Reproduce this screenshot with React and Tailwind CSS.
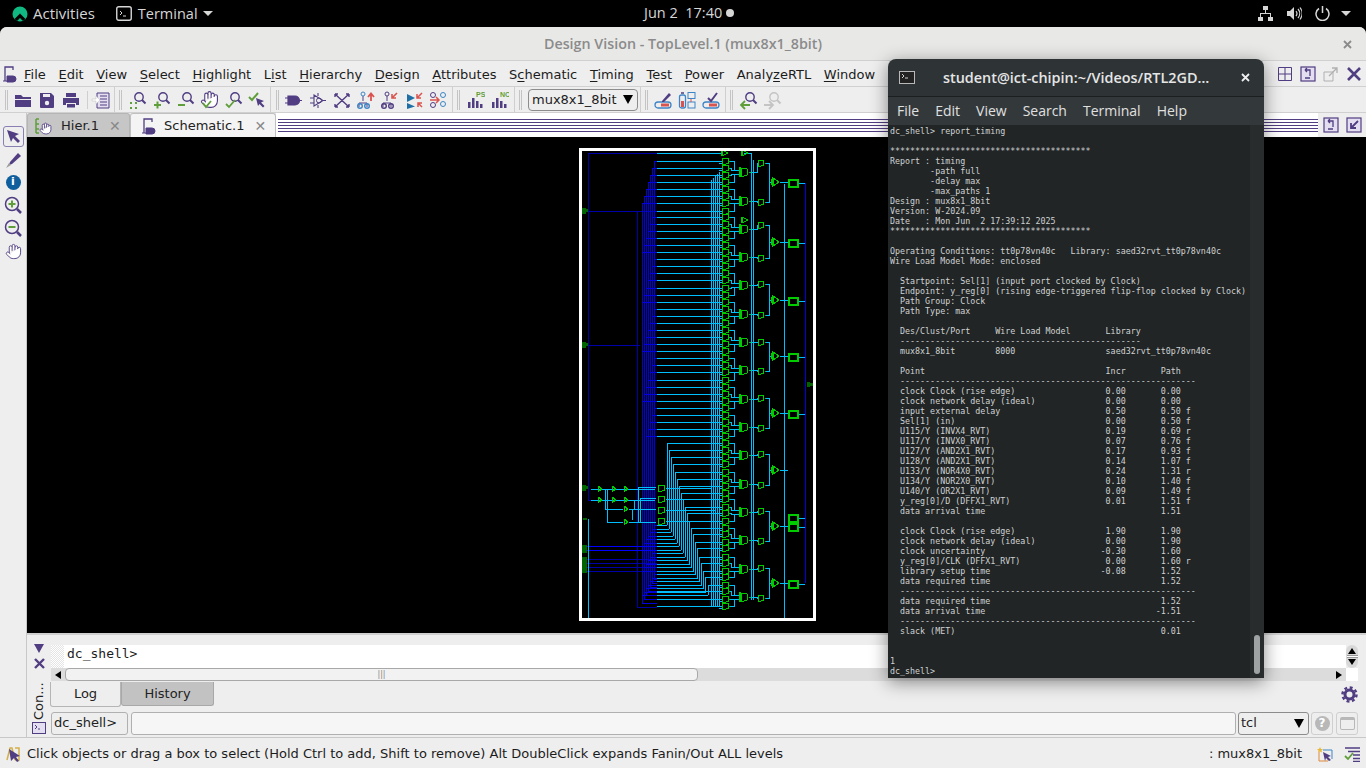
import React from "react";
import { Hand } from "lucide-react";

const P = "#503d82";
const G = "#5f9e3a";
const R_ = "#d9534f";
const B = "#3d85c6";

const sans = "font-['DejaVu_Sans',sans-serif]";
const shell = "font-['Open_Sans',sans-serif]";
const mono = "font-['DejaVu_Sans_Mono',monospace]";

// ---- schematic data (page coordinates, the svg viewBox starts at 582,151)
const ROWS = [161, 168, 175, 182, 189, 196, 203, 211, 217, 224, 231, 238, 245, 252, 259, 266, 273, 280, 288, 295, 302, 309, 316, 323, 330, 337, 344, 351, 358, 365, 372, 380, 387, 394, 401, 408, 415, 422, 429, 436, 443, 450, 457, 464, 472, 479, 486, 493, 499, 507, 513, 521, 528, 534, 542, 548, 557, 563, 571, 577, 585, 591, 599, 606];
const L3 = [172, 201, 229, 257, 285, 314, 342, 370, 399, 427, 455, 484, 512, 540, 569, 597];
const L4 = [163, 202, 225, 258, 284, 315, 342, 371, 398, 428, 454, 485, 511, 541, 568, 598];
const L5 = [182, 242, 300, 356, 413, 470, 526, 583];
const FF = [183, 243, 301, 357, 414, 518, 527, 584];
const TRUNKS = [654, 652, 650, 648, 646, 644, 642, 637];

function buildSchematic() {
  let cyan = "M657 153H722M744 153H751M751 153V600M753 160V600M784 184V618M588 519V618";
  let blue = "M805 183V583";
  let navy = "M588 153V500M588 153H657M587 211H657M587 345H640M588 500H597M587 559H657M587 563H657M587 567H657M587 571H657";
  let bright = "M587 546H657M587 550H657";
  let gate = "M722 150l6 3l-6 3zM721 150v6M742 150l6 3l-6 3zM741 150v6M742 217l6 3l-6 3zM741 217v6";
  let pin = "";

  TRUNKS.forEach((x, t) => {
    const top = t === 7 ? 211 : 161 + 7 * t;
    const bot = t === 7 ? 607 : 579 + 4 * t;
    const seg = `M${x} ${top}V${bot}M${x} ${bot}H657`;
    if (t === 7) navy += seg;
    else blue += seg;
  });

  const firstLow = ROWS.indexOf(443);
  ROWS.forEach((y, i) => {
    const k = i - firstLow;
    if (k >= 0 && k <= 20) {
      const x = 667 + 2.05 * k;
      const yb = Math.round(525 + 3.5 * k);
      cyan += `M${x} ${y}H722M${x} ${y}V${yb}M657 ${yb}H${x}`;
      blue += `M${TRUNKS[k % 7]} ${yb}H657`;
    } else {
      cyan += `M657 ${y}H722`;
      if (i < firstLow) {
        // the stub only reaches a trunk that has started by this row
        const t = i % 7;
        const tr = 161 + 7 * t <= y ? TRUNKS[t] : 654;
        blue += `M${tr} ${y}H657`;
      }
    }
    cyan += `M719 ${y + 2}H722`;
    gate += `M722 ${y - 3}h4a3 3 0 0 1 0 6h-4zM729 ${y}h1`;
    // outputs run to the mux of their group
    const j = Math.min(15, Math.floor(i / 4));
    const side = i % 4 < 2 ? -2 : 2;
    const bend = 731 + (i % 4 === 0 || i % 4 === 3 ? 3 : 0);
    cyan += `M730 ${y}H${bend}V${L3[j] + side}H740`;
  });
  cyan += "M711 180V606M713 178V606M715 176V606M717 174V606M719 172V606";

  L3.forEach((y, j) => {
    gate += `M741 ${y - 4}h3a4 4 0 0 1 0 8h-3zM740 ${y - 5}v10M739 ${y - 5}v10M749 ${y}h2`;
    cyan += `M751 ${y}H757V${L4[j]}H758`;
    gate += `M758 ${L4[j] - 3}h3a3 3 0 0 1 0 6h-3zM765 ${L4[j]}h1`;
    if (j % 2 === 0) {
      const m = j / 2;
      cyan += `M766 ${L4[j]}H769V${L4[j + 1]}H766M769 ${L5[m]}H771`;
      gate += `M773 ${L5[m] - 4}l6 4l-6 4zM772 ${L5[m] - 5}v10M771 ${L5[m] - 3}v6`;
    }
  });
  L5.forEach((y, m) => {
    cyan += `M780 ${y}H788`;
    cyan += `M798 ${FF[m]}H805`;
    gate += `M789 ${FF[m] - 3}h8v6h-8zM788 ${FF[m] - 4}h10v8h-10z`;
  });

  // select decode at the bottom left
  [598, 612, 624].forEach((x) => {
    gate += `M${x} ${486}l4 3l-4 3zM${x} ${497}l4 3l-4 3z`;
  });
  gate += "M624 506l4 3l-4 3zM624 519l4 3l-4 3z";
  [488, 499, 510, 521].forEach((y, n) => {
    gate += `M658 ${y - 3}h4a3 3 0 0 1 0 6h-4z`;
    cyan += `M666 ${y}H${711 + 2 * n}`;
  });
  cyan += "M591 489H655M591 500H655M605 489V509H623M607 489V522H623M629 509H656M629 522H656M638 487V522M640 498V522M632 509V520M634 500V509";
  cyan += "M638 487H656M640 498H656";

  pin += "M582 208h4v1h2v3h-2v2h-4zM582 342h4v1h2v3h-2v2h-4zM582 485h4v1h2v3h-2v2h-4zM582 545h5v8h-5zM582 557h5v16h-5zM583 518h4v2h-4zM807 382h3v1h3v3h-3v1h-3z";
  return { cyan, blue, navy, bright, gate, pin };
}
const S = buildSchematic();

const Schematic = () => (
  <div className="ml-[552px] mt-[11px] h-[473px] w-[237px] border-[3px] border-white">
    <svg width="231" height="467" viewBox="582 151 231 467" fill="none" shapeRendering="crispEdges">
      <path d={S.navy} stroke="#0000a8" />
      <path d={S.blue} stroke="#0000e0" />
      <path d={S.bright} stroke="#0000ff" />
      <path d={S.cyan} stroke="#00bfff" />
      <path d={S.gate} stroke="#00cc00" />
      <path d={S.pin} fill="#006400" />
    </svg>
  </div>
);

// ---- terminal text
const row = (name, incr = "", path = "", tag = "") =>
  ("  " + name).padEnd(42) + incr.padStart(5) + path.padStart(11) + (tag ? " " + tag : "");
const dash = "  " + "-".repeat(59);
const stars = "*".repeat(40);
const LINES = [
  "dc_shell> report_timing",
  "",
  stars,
  "Report : timing",
  "        -path full",
  "        -delay max",
  "        -max_paths 1",
  "Design : mux8x1_8bit",
  "Version: W-2024.09",
  "Date   : Mon Jun  2 17:39:12 2025",
  stars,
  "",
  "Operating Conditions: tt0p78vn40c   Library: saed32rvt_tt0p78vn40c",
  "Wire Load Model Mode: enclosed",
  "",
  "  Startpoint: Sel[1] (input port clocked by Clock)",
  "  Endpoint: y_reg[0] (rising edge-triggered flip-flop clocked by Clock)",
  "  Path Group: Clock",
  "  Path Type: max",
  "",
  "  Des/Clust/Port     Wire Load Model       Library",
  "  " + "-".repeat(48),
  "  mux8x1_8bit        8000                  saed32rvt_tt0p78vn40c",
  "",
  row("Point", "Incr", " Path"),
  dash,
  row("clock Clock (rise edge)", "0.00", "0.00"),
  row("clock network delay (ideal)", "0.00", "0.00"),
  row("input external delay", "0.50", "0.50", "f"),
  row("Sel[1] (in)", "0.00", "0.50", "f"),
  row("U115/Y (INVX4_RVT)", "0.19", "0.69", "r"),
  row("U117/Y (INVX0_RVT)", "0.07", "0.76", "f"),
  row("U127/Y (AND2X1_RVT)", "0.17", "0.93", "f"),
  row("U128/Y (AND2X1_RVT)", "0.14", "1.07", "f"),
  row("U133/Y (NOR4X0_RVT)", "0.24", "1.31", "r"),
  row("U134/Y (NOR2X0_RVT)", "0.10", "1.40", "f"),
  row("U140/Y (OR2X1_RVT)", "0.09", "1.49", "f"),
  row("y_reg[0]/D (DFFX1_RVT)", "0.01", "1.51", "f"),
  row("data arrival time", "", "1.51"),
  "",
  row("clock Clock (rise edge)", "1.90", "1.90"),
  row("clock network delay (ideal)", "0.00", "1.90"),
  row("clock uncertainty", "-0.30", "1.60"),
  row("y_reg[0]/CLK (DFFX1_RVT)", "0.00", "1.60", "r"),
  row("library setup time", "-0.08", "1.52"),
  row("data required time", "", "1.52"),
  dash,
  row("data required time", "", "1.52"),
  row("data arrival time", "", "-1.51"),
  dash,
  row("slack (MET)", "", "0.01"),
  "",
  "",
  "1",
  "dc_shell> ",
];

// ---- small icons
const Ico = ({ children, s = 20 }) => (
  <svg width={s} height={s} viewBox="0 0 20 20" fill="none">
    {children}
  </svg>
);
const Mag = ({ c = P }) => (
  <>
    <circle cx="12" cy="7" r="4.2" stroke={c} strokeWidth="1.4" />
    <path d="M15 10l3.5 3.5" stroke={c} strokeWidth="2" />
  </>
);
const Bars = ({ t }) => (
  <>
    <path d="M3 12h2.5v6H3zM7 8h2.5v10H7zM11 11h2.5v7H11zM15 14h2.5v4H15z" fill={P} />
    <text x="11" y="7" fontSize="7" fontWeight="700" fill={G} fontFamily="Liberation Sans">{t}</text>
  </>
);
const Battery = ({ mark }) => (
  <>
    <rect x="2" y="12" width="16" height="6" rx="3" stroke={B} strokeWidth="1.3" />
    <rect x="8" y="13.5" width="8" height="3" fill={R_} />
    {mark}
  </>
);

const TOOL_ICONS = {
  folder: <path d="M2 5h6l2 2h8v2H2zM2 10h16v7H2z" fill={P} />,
  save: (
    <>
      <path d="M3 3h11l3 3v11a1 1 0 0 1-1 1H4a1 1 0 0 1-1-1z" fill={P} />
      <rect x="6" y="4" width="7" height="3" fill="#eee" />
      <circle cx="10" cy="13" r="2.2" fill="#eee" />
    </>
  ),
  print: (
    <>
      <path d="M5 3h10v4H5zM2 8h16v7h-3v-2H5v2H2z" fill={P} />
      <rect x="6" y="14" width="8" height="3.5" fill={P} />
    </>
  ),
  script: (
    <>
      <path d="M6 3h12v15H6z" fill="#e3dff0" stroke={P} />
      <path d="M9 6h7M9 9h7M9 12h7M9 15h7" stroke={P} />
      <path d="M1 9h4V6l4 4-4 4v-3H1z" fill="#fff" stroke="#bbb" strokeWidth=".5" />
    </>
  ),
  zfit: (
    <>
      <Mag />
      <path d="M3 12h2v2H3zM8 12h2v2H8zM3 17h2v2H3zM8 17h2v2H8z" fill={G} />
    </>
  ),
  zin: (
    <>
      <Mag />
      <path d="M3 15h7M6.5 11.5v7" stroke={G} strokeWidth="2" />
    </>
  ),
  zout: (
    <>
      <Mag />
      <path d="M3 15h7" stroke={G} strokeWidth="2" />
    </>
  ),
  hand: (
    <>
      <foreignObject x="1" y="0" width="19" height="19">
        <Hand size={19} color={P} fill="#fff" strokeWidth={1.4} />
      </foreignObject>
      <path d="M4 13l3 4 5-6" stroke={G} strokeWidth="1.8" />
    </>
  ),
  zcheck: (
    <>
      <Mag />
      <path d="M3 14l3 3 6-7" stroke={G} strokeWidth="1.8" />
    </>
  ),
  checkarrow: (
    <>
      <path d="M2 7l3 3 6-7" stroke={G} strokeWidth="2" />
      <path d="M9 8l8 3-3 1.5 3.5 3.5-1.5 1.5-3.5-3.5L11 16z" fill={P} />
    </>
  ),
  plug: <path d="M4 6h7a4.5 4.5 0 0 1 0 9H4zM1 8h3M1 13h3M15 10.5h3" fill={P} stroke={P} strokeWidth="1.2" />,
  gate: (
    <>
      <path d="M6 5l9 5.5L6 16zM2 8h4M2 13h4M15 10.5h3M10 3v3M10 15v3" stroke={P} strokeWidth="1.1" />
      <circle cx="11" cy="10.5" r="2.5" stroke={P} />
    </>
  ),
  cross: <path d="M3 4l14 13M17 4L3 17M3 4h3M3 4v3M17 4h-3M17 4v3M3 17h3M3 17v-3M17 17h-3M17 17v-3" stroke={P} strokeWidth="1.4" />,
  treeup: (
    <>
      <path d="M7 6v5M3 17v-4h8v4" stroke={P} />
      <circle cx="7" cy="4" r="2" stroke={B} />
      <circle cx="4" cy="16" r="2.3" stroke={B} strokeWidth="1.4" />
      <circle cx="11" cy="16" r="2.3" stroke={B} strokeWidth="1.4" />
      <path d="M15 11V4M12 7l3-3.5L18 7" stroke={R_} strokeWidth="1.8" />
    </>
  ),
  treedown: (
    <>
      <path d="M7 6v5M3 17v-4h8v4" stroke={P} />
      <circle cx="7" cy="4" r="2" stroke={P} />
      <circle cx="4" cy="16" r="2.3" stroke={P} strokeWidth="1.4" />
      <circle cx="11" cy="16" r="2.3" stroke={P} strokeWidth="1.4" />
      <path d="M17 3l-5 5M12 4v4h4" stroke={R_} strokeWidth="1.6" />
    </>
  ),
  tri: (
    <>
      <path d="M3 4l8 4-8 4zM3 13l8 3.5L3 19z" fill="#1d6fa5" />
      <path d="M18 3l-5 5M13 4v4h4M18 17l-4-4M14 17v-4h4" stroke={R_} strokeWidth="1.5" />
    </>
  ),
  nodes: (
    <>
      <circle cx="5" cy="5" r="2.5" stroke={P} />
      <circle cx="15" cy="5" r="2.5" stroke={B} />
      <circle cx="15" cy="14" r="2.5" stroke={B} />
      <circle cx="5" cy="15" r="2.5" stroke={P} />
      <path d="M2 10h9M8 7l3 3-3 3" stroke={R_} strokeWidth="1.5" />
    </>
  ),
  ps: <Bars t="PS" />,
  nc: <Bars t="NC" />,
  pen: <Battery mark={<path d="M9 11L16 3l2 2-7 7H9z" fill={P} />} />,
  cells: (
    <>
      <rect x="2.5" y="5" width="6" height="13" rx="2" stroke={B} strokeWidth="1.3" />
      <rect x="4" y="11" width="3" height="6" fill={R_} />
      <path d="M4 3h3" stroke={P} strokeWidth="1.5" />
      <rect x="11" y="2.5" width="7" height="6" stroke={B} />
      <rect x="11" y="12" width="7" height="6" stroke={B} />
      <path d="M14 9v3" stroke={R_} />
    </>
  ),
  batcheck: <Battery mark={<path d="M7 8l3 3 6-8" stroke={P} strokeWidth="2" />} />,
  back: (
    <>
      <Mag />
      <path d="M12 15H3M7 11l-4 4 4 4" stroke={G} strokeWidth="1.8" />
    </>
  ),
  fwd: (
    <>
      <Mag c="#c4c4c4" />
      <path d="M2 15h9M7 11l4 4-4 4" stroke="#c4c4c4" strokeWidth="1.8" />
    </>
  ),
};

const Tool = ({ name }) => (
  <div className="flex h-[24px] w-[24px] items-center justify-center">
    <Ico>{TOOL_ICONS[name]}</Ico>
  </div>
);
const Grip = ({ className = "" }) => (
  <div className={`h-[20px] w-[3px] border-x border-[#c4c4c4] ${className}`} />
);
const VSep = ({ className = "" }) => <div className={`h-[26px] w-px bg-[#cfcfcf] ${className}`} />;

const MENU = [
  ["", "F", "ile"], ["", "E", "dit"], ["", "V", "iew"], ["", "S", "elect"], ["", "H", "ighlight"],
  ["L", "i", "st"], ["", "H", "ierarchy"], ["", "D", "esign"], ["", "A", "ttributes"], ["S", "c", "hematic"],
  ["", "T", "iming"], ["", "T", "est"], ["", "P", "ower"], ["Analy", "z", "eRTL"], ["", "W", "indow"],
];

const TabLines = () => (
  <div className="flex h-[13px] flex-1 flex-col justify-between">
    <div className="h-px bg-[#503d82]" />
    <div className="h-px bg-[#503d82]" />
    <div className="h-px bg-[#503d82]" />
    <div className="h-px bg-[#503d82]" />
    <div className="h-px bg-[#503d82]" />
  </div>
);

const Undock = () => (
  <svg width="18" height="18" viewBox="0 0 18 18" fill="none">
    <rect x="2" y="2" width="14" height="14" fill="#e3dff0" stroke={P} strokeWidth="1.2" />
    <path d="M6 5h5v6M6 5l2-2M6 5l2 2M6 13h5" stroke={P} strokeWidth="1.3" />
  </svg>
);

const SchIcon = () => (
  <svg width="16" height="18" viewBox="0 0 16 18" fill="none">
    <path d="M3 16V2h8v3" stroke={P} strokeWidth="1.3" />
    <path d="M5 11h6a3 3 0 0 1 0 6H5zM1 16h4" fill={P} stroke={P} />
  </svg>
);

const Slot = ({ children }) => <div className="flex h-[23px] w-full items-center justify-center">{children}</div>;

export default function App() {
  return (
    <div className={`relative flex h-[768px] w-[1366px] flex-col overflow-hidden bg-black ${sans}`}>
      {/* gnome top bar */}
      <div className={`relative flex h-[27px] shrink-0 items-center text-[15px] text-[#d6d6d6] ${shell}`}>
        <svg className="ml-[12px]" width="16" height="16" viewBox="0 0 16 16">
          <circle cx="8" cy="8" r="7.5" fill="#10b981" />
          <path d="M2.5 13L8 7.5l5.5 5.5L11 15l-3-3-3 3z" fill="#000" />
        </svg>
        <span className="ml-[5px]">Activities</span>
        <svg className="ml-[21px]" width="16" height="15" viewBox="0 0 16 15" fill="none">
          <rect x=".75" y=".75" width="14.5" height="13.5" rx="2" stroke="#d6d6d6" strokeWidth="1.4" />
          <path d="M4 5l2 2-2 2M7 10h3" stroke="#d6d6d6" />
        </svg>
        <span className="ml-[6px] text-[14.5px]">Terminal</span>
        <span className="ml-[5px] h-0 w-0 border-x-[5px] border-t-[5px] border-x-transparent border-t-[#d6d6d6]" />
        <div className="absolute left-[644px] top-[2px] flex items-center whitespace-pre text-[14.5px]">
          Jun 2  17:40
          <span className="ml-[4px] h-[8px] w-[8px] rounded-full bg-[#d6d6d6]" />
        </div>
        <div className="ml-auto mr-[15px] flex items-center">
          <svg width="15" height="15" viewBox="0 0 15 15" fill="#d6d6d6">
            <path d="M5 0h5v4H8v3h5v4h2v4h-5v-4h2V8H3v3h2v4H0v-4h2V7h5V4H5z" />
          </svg>
          <svg className="ml-[13px]" width="16" height="15" viewBox="0 0 16 15" fill="none">
            <path d="M1 5h3l4-4v13l-4-4H1z" fill="#d6d6d6" />
            <path d="M10 5a4 4 0 0 1 0 5M12 3a7 7 0 0 1 0 9M14 1.5a10 10 0 0 1 0 12" stroke="#d6d6d6" strokeWidth="1.2" />
          </svg>
          <svg className="ml-[13px]" width="15" height="15" viewBox="0 0 15 15" fill="none">
            <path d="M4 2.5a6.5 6.5 0 1 0 7 0M7.5 0v7" stroke="#d6d6d6" strokeWidth="1.5" />
          </svg>
          <span className="ml-[11px] h-0 w-0 border-x-[5px] border-t-[5px] border-x-transparent border-t-[#d6d6d6]" />
        </div>
      </div>

      {/* design vision window */}
      <div className="flex min-h-0 flex-1 flex-col overflow-hidden rounded-t-[7px] bg-[#eeeeee]">
        <div className={`relative flex h-[33px] shrink-0 items-center justify-center bg-[#e8e8e7] text-[14.3px] font-semibold text-[#8b8b8b] ${shell}`}>
          Design Vision - TopLevel.1 (mux8x1_8bit)
          <svg className="absolute left-[1343px] top-[13px]" width="9" height="9" viewBox="0 0 9 9">
            <path d="M1 1l7 7M8 1L1 8" stroke="#8b8b8b" strokeWidth="1.8" />
          </svg>
        </div>

        {/* menu bar */}
        <div className="flex h-[27px] shrink-0 items-center border-y border-[#d0d0d0] text-[13px] text-[#1c1c1c]">
          <svg className="ml-[2px] mr-[6px]" width="16" height="18" viewBox="0 0 16 18" fill="none">
            <path d="M3 16V2h8v3" stroke={P} strokeWidth="1.3" />
            <path d="M5 11h6a3 3 0 0 1 0 6H5zM1 16h4" fill={P} stroke={P} />
          </svg>
          <div className="flex gap-[12.65px] pt-[2px]">
            {MENU.map(([a, u, b], i) => (
              <span key={i}>
                {a}
                <span className="underline underline-offset-2">{u}</span>
                {b}
              </span>
            ))}
          </div>
          <div className="ml-auto flex items-center pr-px">
            <div className="flex w-[23px] justify-center">
              <svg width="14" height="14" viewBox="0 0 14 14" fill="none">
                <path d="M.5.5h13v13H.5zM.5 7h13M7 .5v13" stroke={P} />
              </svg>
            </div>
            <div className="flex w-[23px] justify-center">
              <Undock />
            </div>
            <div className="flex w-[23px] justify-center">
              <svg width="16" height="16" viewBox="0 0 16 16" fill="none">
                <path d="M1 6h9v9H1z" stroke="#b0b0b0" />
                <path d="M6 10l8-8M9 2h5v5" stroke="#b0b0b0" strokeWidth="1.3" />
              </svg>
            </div>
            <div className="flex w-[23px] justify-center">
              <svg width="14" height="14" viewBox="0 0 14 14">
                <path d="M1 1l12 12M13 1L1 13" stroke={P} strokeWidth="2.6" />
              </svg>
            </div>
          </div>
        </div>

        {/* tool bar */}
        <div className="flex h-[26px] shrink-0 items-center border-b border-[#d0d0d0]">
          <Grip className="ml-[5px] mr-[3px]" />
          <Tool name="folder" />
          <Tool name="save" />
          <Tool name="print" />
          <div className="ml-[4px] mr-[1px] h-[18px] w-px bg-[#cfcfcf]" />
          <Tool name="script" />
          <VSep className="ml-[1px] mr-[4px]" />
          <Grip className="mr-[3px]" />
          <Tool name="zfit" />
          <Tool name="zin" />
          <Tool name="zout" />
          <Tool name="hand" />
          <Tool name="zcheck" />
          <Tool name="checkarrow" />
          <VSep className="ml-[1px] mr-[5px]" />
          <Grip className="mr-[3px]" />
          <Tool name="plug" />
          <Tool name="gate" />
          <Tool name="cross" />
          <Tool name="treeup" />
          <Tool name="treedown" />
          <Tool name="tri" />
          <Tool name="nodes" />
          <VSep className="ml-[2px] mr-[4px]" />
          <Grip className="mr-[3px]" />
          <Tool name="ps" />
          <Tool name="nc" />
          <VSep className="ml-[3px] mr-[4px]" />
          <Grip className="mr-[6px]" />
          <div className="flex h-[22px] w-[110px] items-center justify-between rounded-[4px] border border-[#8c8c8c] pl-[3px] pr-[4px] text-[13px] text-[#1c1c1c]">
            mux8x1_8bit
            <span className="h-0 w-0 border-x-[5px] border-t-[9px] border-x-transparent border-t-black" />
          </div>
          <VSep className="ml-[2px] mr-[4px]" />
          <Grip className="mr-[3px]" />
          <Tool name="pen" />
          <Tool name="cells" />
          <Tool name="batcheck" />
          <VSep className="ml-[2px] mr-[4px]" />
          <Grip className="mr-[3px]" />
          <Tool name="back" />
          <Tool name="fwd" />
        </div>

        <div className="flex min-h-0 flex-1">
          {/* left tool column */}
          <div className="flex w-[27px] shrink-0 flex-col items-center border-r border-[#c8c8c8] pt-[12px]">
            <Slot>
              <div className="flex h-[21px] w-[21px] items-center justify-center rounded-[3px] border border-[#8a7fb0]">
                <svg width="15" height="15" viewBox="0 0 15 15">
                  <path d="M1 1l12 4-4 2 5 5-2 2-5-5-2 4z" fill={P} />
                </svg>
              </div>
            </Slot>
            <Slot>
              <svg width="20" height="20" viewBox="0 0 20 20">
                <path d="M7 12l8-9 3 3-9 8-3 1z" fill={P} />
                <path d="M3 18l3-5 2 2z" fill="#9a9a9a" />
              </svg>
            </Slot>
            <Slot>
              <div className="flex h-[15px] w-[15px] items-center justify-center rounded-full bg-[#0f5f9e] text-[11px] font-bold text-white">i</div>
            </Slot>
            <Slot>
              <svg width="19" height="19" viewBox="0 0 19 19" fill="none">
                <circle cx="8" cy="8" r="6.5" stroke={P} strokeWidth="1.5" />
                <path d="M8 4.5v7M4.5 8h7" stroke={G} strokeWidth="2" />
                <path d="M13 13l4 4" stroke={P} strokeWidth="2.5" />
              </svg>
            </Slot>
            <Slot>
              <svg width="19" height="19" viewBox="0 0 19 19" fill="none">
                <circle cx="8" cy="8" r="6.5" stroke={P} strokeWidth="1.5" />
                <path d="M4.5 8h7" stroke={G} strokeWidth="2" />
                <path d="M13 13l4 4" stroke={P} strokeWidth="2.5" />
              </svg>
            </Slot>
            <Slot>
              <Hand size={17} color={P} fill="#fff" strokeWidth={1.3} />
            </Slot>
          </div>

          <div className="flex min-w-0 flex-1 flex-col">
            {/* tabs */}
            <div className="flex h-[24px] shrink-0 items-center bg-[#eeeeee] text-[13px] text-[#222]">
              <div className="flex h-[24px] w-[103px] shrink-0 items-center rounded-t-[3px] border border-b-0 border-[#b5b5b5] bg-[#c6c6c6] pl-[6px] pt-px">
                <svg width="18" height="18" viewBox="0 0 18 18" fill="none">
                  <path d="M2 2h3M2 2v14M2 7h3M2 12h3M2 16h3" stroke={G} strokeWidth="1.5" />
                  <foreignObject x="5" y="5" width="13" height="13">
                    <Hand size={13} color={P} fill="#fff" strokeWidth={1.6} />
                  </foreignObject>
                </svg>
                <span className="ml-[9px]">Hier.1</span>
                <span className="ml-[10px] text-[14px] font-bold text-[#888]">✕</span>
              </div>
              <div className="flex h-[24px] w-[146px] shrink-0 items-center rounded-t-[3px] border border-b-0 border-[#c0c0c0] bg-[#f4f4f4] pl-[10px] pt-px">
                <SchIcon />
                <span className="ml-[7px]">Schematic.1</span>
                <span className="ml-[10px] text-[14px] font-bold text-[#888]">✕</span>
              </div>
              <div className="flex h-[24px] flex-1 items-center bg-white pl-[2px]">
                <TabLines />
                <div className="flex h-[24px] w-[48px] shrink-0 items-center justify-end gap-[5px] bg-[#eeeeee] pr-[3px]">
                  <Undock />
                  <svg width="18" height="18" viewBox="0 0 18 18" fill="none">
                    <rect x="2" y="2" width="14" height="14" fill="#e3dff0" stroke={P} strokeWidth="1.2" />
                    <path d="M13 5l-7 7M6 7v5h5" stroke={P} strokeWidth="1.8" />
                  </svg>
                </div>
              </div>
            </div>

            {/* schematic canvas */}
            <div className="h-[496px] shrink-0 overflow-hidden bg-black">
              <Schematic />
            </div>

            {/* console */}
            <div className="flex min-h-0 flex-1 border-t-2 border-[#d0d0d0]">
              <div className="flex w-[24px] shrink-0 flex-col items-center pt-[9px]">
                <span className="h-0 w-0 border-x-[5px] border-t-[9px] border-x-transparent border-t-[#503d82]" />
                <svg className="mt-[5px]" width="11" height="11" viewBox="0 0 11 11">
                  <path d="M1 1l9 9M10 1l-9 9" stroke={P} strokeWidth="2.4" />
                </svg>
                <span className="mt-[9px] flex h-[42px] rotate-180 items-center text-[13px] text-[#222] [writing-mode:vertical-rl]">Con...</span>
                <svg className="mt-[2px]" width="14" height="12" viewBox="0 0 14 12" fill="none">
                  <rect x=".5" y=".5" width="13" height="11" fill="#e3dff0" stroke={P} />
                  <path d="M3 3l2 2-2 2M6 7h2" stroke={P} />
                </svg>
              </div>
              <div className="flex min-w-0 flex-1 flex-col pr-[8px] pt-[10px]">
                <div className="flex h-[23px] shrink-0">
                  <div className="w-[13px] shrink-0 bg-[repeating-conic-gradient(#e4e4e4_0%_25%,#ffffff_0%_50%)] bg-[length:2px_2px]" />
                  <div className={`flex-1 bg-white pl-[3px] text-[13px] leading-[17px] text-[#1c1c1c] ${mono}`}>dc_shell&gt;</div>
                  <div className="flex w-[12px] shrink-0 flex-col items-center justify-center rounded-full bg-[#d8d8d8]">
                    <span className="h-0 w-0 border-x-[4px] border-b-[6px] border-x-transparent border-b-black" />
                    <span className="my-[1px] h-[3px] w-[11px] border-y border-[#999] bg-white" />
                    <span className="h-0 w-0 border-x-[4px] border-t-[6px] border-x-transparent border-t-black" />
                  </div>
                </div>
                <div className="flex h-[13px] shrink-0">
                  <div className="flex h-[13px] flex-1 items-center bg-[#dcdcdc]">
                    <span className="ml-[4px] h-0 w-0 border-y-[4px] border-r-[6px] border-y-transparent border-r-black" />
                    <div className="ml-[4px] flex h-[13px] w-[633px] items-center justify-center rounded-[4px] border border-[#a8a8a8] bg-[#f2f2f2] text-[8px] leading-none text-[#888]">|||</div>
                    <span className="ml-auto mr-[4px] h-0 w-0 border-y-[4px] border-l-[6px] border-y-transparent border-l-black" />
                  </div>
                  <div className="w-[12px] shrink-0 bg-white" />
                </div>
                <div className="mt-px flex h-[25px] shrink-0 text-[13px] text-[#222]">
                  <div className="-ml-px flex h-[25px] w-[71px] items-center justify-center rounded-b-[3px] border border-t-0 border-[#b5b5b5] bg-[#eeeeee]">Log</div>
                  <div className="flex h-[24px] w-[93px] items-center justify-center rounded-b-[3px] border border-t-0 border-[#a8a8a8] bg-[#c2c2c2]">History</div>
                  <svg className="ml-auto mt-[4px]" width="17" height="17" viewBox="0 0 17 17" fill="none">
                    <circle cx="8.5" cy="8.5" r="4.5" stroke={P} strokeWidth="3" />
                    <circle cx="8.5" cy="8.5" r="7" stroke={P} strokeWidth="2.5" strokeDasharray="2.9 2.6" />
                  </svg>
                </div>
                <div className="mt-[4px] flex h-[24px] shrink-0 items-center text-[13px] text-[#222]">
                  <div className="flex h-[23px] w-[77px] items-center rounded-[3px] border border-[#b0b0b0] pl-[2px]">dc_shell&gt;</div>
                  <div className="ml-[3px] h-[23px] flex-1 rounded-[3px] border border-[#b0b0b0] bg-[#f6f6f6]" />
                  <div className="ml-[2px] flex h-[23px] w-[71px] items-center justify-between rounded-[3px] border border-[#8c8c8c] pl-[2px] pr-[4px]">
                    tcl
                    <span className="h-0 w-0 border-x-[5px] border-t-[9px] border-x-transparent border-t-black" />
                  </div>
                  <div className="ml-[2px] flex h-[23px] w-[22px] items-center justify-center rounded-[3px] border border-[#cfcfcf]">
                    <span className="flex h-[15px] w-[15px] items-center justify-center rounded-full bg-[#b8b8b8] text-[12px] font-bold text-white">?</span>
                  </div>
                  <div className="ml-[3px] flex h-[23px] w-[22px] items-center justify-center rounded-[3px] border border-[#cfcfcf]">
                    <span className="h-[13px] w-[15px] rounded-[2px] border border-t-[3px] border-[#b8b8b8]" />
                  </div>
                </div>
              </div>
            </div>
          </div>
        </div>

        {/* status bar */}
        <div className="flex h-[31px] shrink-0 items-center border-t border-[#c8c8c8] pt-px text-[13px] text-[#1c1c1c]">
          <svg className="ml-[6px] mr-[6px]" width="15" height="16" viewBox="0 0 15 16">
            <path d="M1 14l3-12h2l3 12M9 2h4v12H9" fill="none" stroke="#d4b04a" strokeWidth="1.5" />
            <path d="M3 3l11 7-4 1 3 4-2 1-3-4-3 3z" fill={P} />
          </svg>
          <span>Click objects or drag a box to select (Hold Ctrl to add, Shift to remove) Alt DoubleClick expands Fanin/Out ALL levels</span>
          <span className="ml-auto">: mux8x1_8bit</span>
          <svg className="ml-[15px]" width="16" height="16" viewBox="0 0 16 16" fill="none">
            <path d="M2 6v9h9" stroke="#e08a3c" />
            <path d="M6 4h9v9" stroke={B} />
            <path d="M6 6l8 4-3 1 3 3-2 1-3-3-1 3z" fill={P} />
            <path d="M3 1l1 2 2 0-1.5 1.5L5 6.5 3 5.5 1 6.5l.5-2L0 3h2z" fill="#e8b83c" />
          </svg>
          <svg className="ml-[11px] mr-[6px]" width="16" height="16" viewBox="0 0 16 16" fill="none">
            <path d="M1 2h15M4 5.5h12M9 9h7M9 12.5h7M9 15.5h7" stroke={P} strokeWidth="1.3" />
            <path d="M1 10l3 3 5-6" stroke={G} strokeWidth="1.8" />
          </svg>
        </div>
      </div>

      {/* floating terminal window */}
      <div className="absolute left-[888px] top-[59px] flex h-[619px] w-[376px] flex-col overflow-hidden rounded-t-[8px] bg-[#2e3436] shadow-[0_4px_18px_rgba(0,0,0,0.45)]">
        <div className={`relative flex h-[38px] shrink-0 items-center border-b border-[#1c1f20] text-[14.4px] font-semibold text-[#e6e6e6] ${shell}`}>
          <svg className="ml-[11px]" width="16" height="13" viewBox="0 0 16 13" fill="none">
            <rect x=".5" y=".5" width="15" height="12" fill="#222" stroke="#b9b9b9" />
            <path d="M3 3l2 2-2 2M6 7h3" stroke="#ccc" />
          </svg>
          <span className="ml-[28px]">student@ict-chipin:~/Videos/RTL2GD…</span>
          <svg className="absolute right-[14px] top-[14px]" width="9" height="9" viewBox="0 0 9 9">
            <path d="M1 1l7 7M8 1L1 8" stroke="#eee" strokeWidth="1.8" />
          </svg>
        </div>
        <div className={`flex h-[28px] shrink-0 items-center gap-[16px] bg-[#33393b] pb-[2px] pl-[9px] text-[14px] text-[#e0e0e0] ${shell}`}>
          <span>File</span>
          <span>Edit</span>
          <span>View</span>
          <span>Search</span>
          <span>Terminal</span>
          <span>Help</span>
        </div>
        <div className="flex min-h-0 flex-1 bg-[#212526]">
          <pre className={`min-w-0 flex-1 overflow-hidden pl-[2px] pt-px text-[8.33px] leading-[10px] text-[#cfd2d2] ${mono}`}>
            {LINES.join("\n")}
          </pre>
          <div className="flex w-[14px] shrink-0 flex-col justify-end bg-[#282c2d] pb-[4px] pl-[4px]">
            <div className="h-[39px] w-[6px] rounded-full bg-[#a0a3a3]" />
          </div>
        </div>
      </div>
    </div>
  );
}
